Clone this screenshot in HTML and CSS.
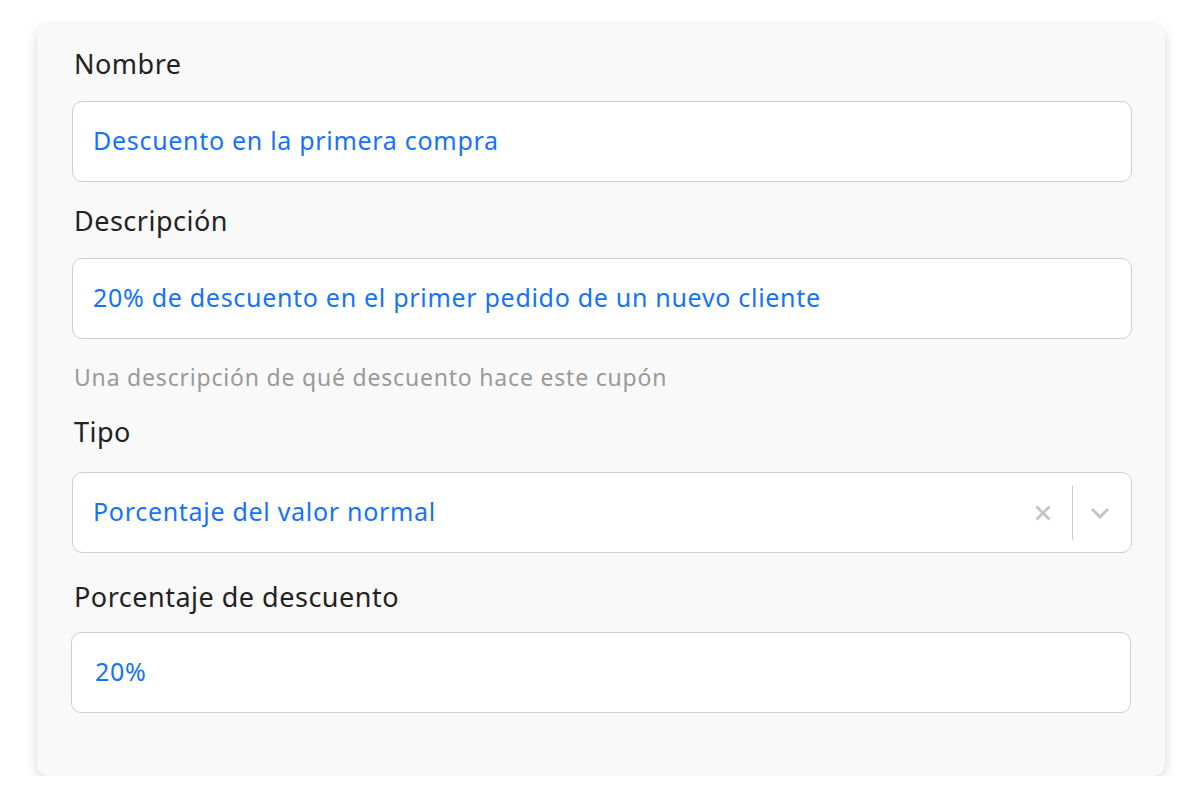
FILE: index.html
```html
<!DOCTYPE html>
<html lang="es">

<head>
    <meta charset="UTF-8">
    <meta name="viewport" content="width=device-width, initial-scale=1.0">
    <title>Cupón</title>
    <link rel="stylesheet" href="styles.css">
</head>

<body>
    <div class="card">
        <div class="field name">
            <label class="label">Nombre</label>
            <div class="input">Descuento en la primera compra</div>
        </div>

        <div class="field">
            <label class="label">Descripción</label>
            <div class="input">20% de descuento en el primer pedido de un nuevo cliente</div>
            <p class="help">Una descripción de qué descuento hace este cupón</p>
        </div>

        <div class="field type">
            <label class="label">Tipo</label>
            <div class="input select">
                <span class="value">Porcentaje del valor normal</span>
                <span class="clear">
                    <svg width="18" height="18" viewBox="0 0 18 18">
                        <path d="M2.5 2.5 L15.5 15.5 M15.5 2.5 L2.5 15.5" stroke="#c4c4c4" stroke-width="2.8" fill="none" />
                    </svg>
                </span>
                <span class="sep"></span>
                <span class="arrow">
                    <svg width="20" height="12" viewBox="0 0 20 12">
                        <path d="M2 2 L10 10 L18 2" stroke="#c4c4c4" stroke-width="3" fill="none" />
                    </svg>
                </span>
            </div>
        </div>

        <div class="field last">
            <label class="label">Porcentaje de descuento</label>
            <div class="input">20%</div>
        </div>
    </div>
</body>

</html>
```

FILE: styles.css
```css
body {
    margin: 0;
    padding: 24px 36px 0 37px;
    background-color: #ffffff;
    font-family: "Noto Sans", Arial, sans-serif;
}

.card {
    background: #f9f9f9;
    border-radius: 12px;
    box-shadow: 0px 4px 12px rgba(0, 0, 0, 0.16);
    padding: 22px 33px 62px 35px;
    height: 752px;
    box-sizing: border-box;
}

.field {
    margin-bottom: 22px;
}

.field.name {
    margin-bottom: 21px;
}

.field.type {
    margin-bottom: 26px;
}

.field.type .label {
    margin-bottom: 22px;
}

.field.last {
    margin-bottom: 0;
}

.field.last .label {
    margin-bottom: 17px;
}

.field.last .input {
    margin-left: -1px;
    margin-right: 1px;
    padding-left: 23px;
}

.label {
    display: block;
    font-size: 27px;
    line-height: 36px;
    letter-spacing: 0.5px;
    color: #222222;
    padding-left: 2px;
    margin-bottom: 19px;
}

.input {
    display: flex;
    align-items: center;
    height: 81px;
    box-sizing: border-box;
    background: #ffffff;
    border: 1px solid #cfcfcf;
    border-radius: 10px;
    padding: 0 20px 3px;
    font-size: 25px;
    letter-spacing: 0.7px;
    color: #1472ff;
}

.help {
    margin: 23px 0 0 2px;
    font-size: 23px;
    line-height: 30px;
    letter-spacing: 0.8px;
    color: #9a9a9a;
}

.select {
    padding-right: 21px;
    padding-bottom: 0;
}

.select .value {
    flex: 1;
    padding-bottom: 3px;
}

.clear {
    display: flex;
    margin-right: 20px;
}

.sep {
    width: 1px;
    height: 54px;
    background: #cccccc;
    margin-right: 17px;
}

.arrow {
    display: flex;
}
```
